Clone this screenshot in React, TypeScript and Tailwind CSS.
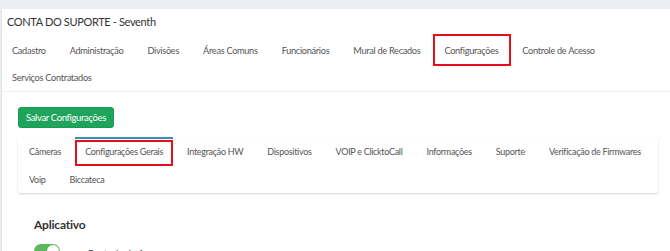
import React from "react";

const topNav = [
  "Cadastro",
  "Administração",
  "Divisões",
  "Áreas Comuns",
  "Funcionários",
  "Mural de Recados",
  "Configurações",
  "Controle de Acesso",
  "Serviços Contratados",
];

const tabs = [
  "Câmeras",
  "Configurações Gerais",
  "Integração HW",
  "Dispositivos",
  "VOIP e ClicktoCall",
  "Informações",
  "Suporte",
  "Verificação de Firmwares",
  "Voip",
  "Biccateca",
];

export default function App() {
  return (
    <div
      className="w-full h-[251px] overflow-hidden bg-[#eaedf2] pt-[9px] pl-[1px]"
      style={{ fontFamily: "Lato, 'Open Sans', sans-serif" }}
    >
      <div className="bg-white h-full border-l border-[#e3e3e3]">
        <div className="h-[28px] pl-[5px] pt-[4px] text-[11px] tracking-[-0.35px] text-[#333] leading-[18px]">
          CONTA DO SUPORTE - Seventh
        </div>
        <div className="flex flex-wrap pl-[10px] gap-x-[24px] border-b border-[#f0f0f0] text-[9.2px] tracking-[-0.3px] text-[#555]">
          {topNav.map((t) => (
            <div key={t} className="relative h-[27px] flex items-center">
              {t}
              {t === "Configurações" && (
                <span className="absolute left-[-11px] right-[-13px] top-[-3px] bottom-[-2px] border-2 border-[#e3101c]" />
              )}
            </div>
          ))}
        </div>
        <div className="pl-[16px] pr-[12px] pt-[15px]">
          <button className="block h-[21px] w-[96px] rounded-[3px] bg-[#1ea55b] border border-[#189a51] text-white text-[9.5px] tracking-[-0.35px] leading-none">
            Salvar Configurações
          </button>
          <div className="mt-[9px] rounded-[3px] bg-white shadow-[0_1px_2px_rgba(0,0,0,0.18)]">
            <div className="flex flex-wrap pl-[1px] gap-x-[4px] text-[9px] tracking-[-0.3px] text-[#555]">
              {tabs.map((t) => (
                <div
                  key={t}
                  className={
                    t === "Configurações Gerais"
                      ? "relative h-[28px] px-[10px] flex items-center border-t-2 border-[#3c8dbc]"
                      : "relative h-[28px] px-[10px] flex items-center border-t-2 border-transparent"
                  }
                >
                  {t}
                  {t === "Configurações Gerais" && (
                    <span className="absolute left-[0px] right-[0px] top-[1px] bottom-[-1px] border-2 border-[#e3101c]" />
                  )}
                </div>
              ))}
            </div>
          </div>
          <div className="pl-[16px] pt-[23px]">
            <div className="text-[12px] font-bold tracking-[-0.2px] text-[#333]">Aplicativo</div>
            <div className="flex items-start gap-[27px] mt-[10px]">
              <div className="w-[26px] h-[14px] rounded-full bg-[#5cb85c] relative">
                <span className="absolute right-[1px] top-[1px] w-[12px] h-[12px] rounded-full bg-white" />
              </div>
              <span className="text-[9.5px] text-[#333] mt-[3px]">Controle de Acesso</span>
            </div>
          </div>
        </div>
      </div>
    </div>
  );
}
